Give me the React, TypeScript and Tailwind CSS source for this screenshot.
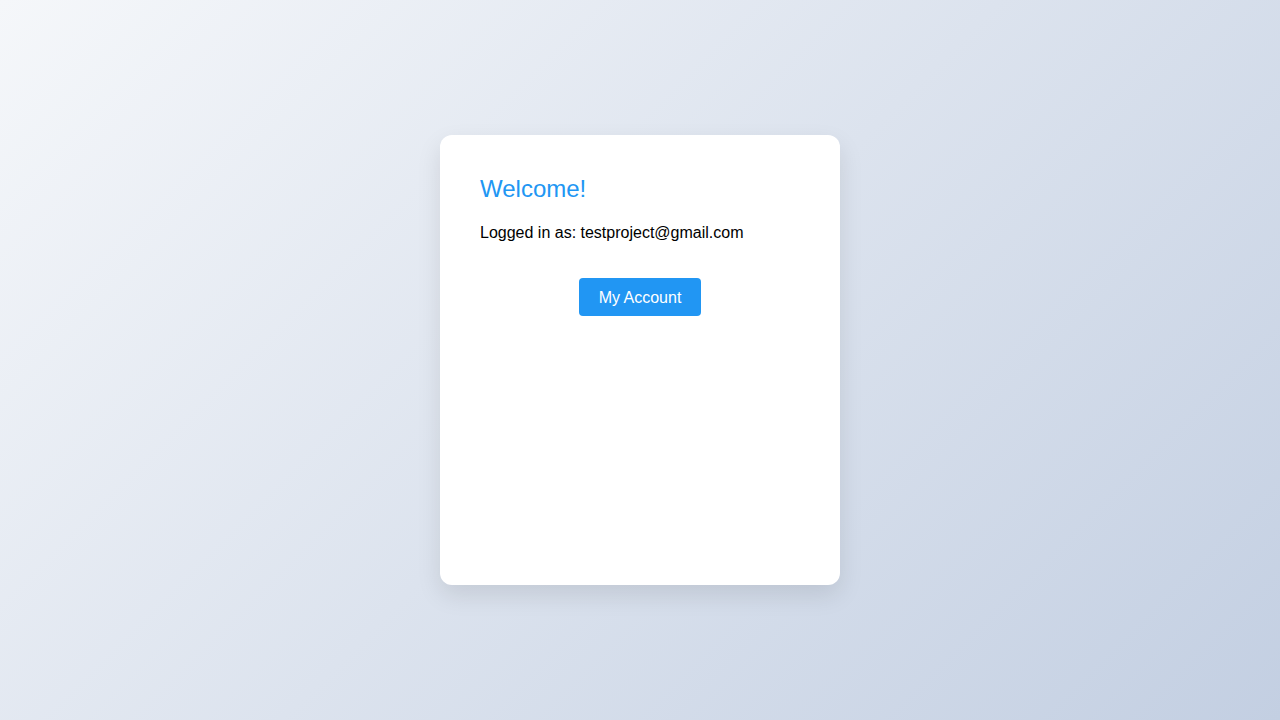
export default function App() {
  return (
    <div className="flex h-[720px] w-full items-center justify-center bg-[linear-gradient(135deg,#f5f7fa_0%,#c3cfe2_100%)] font-['Liberation_Sans',Arial,sans-serif]">
      <div className="h-[450px] w-[400px] rounded-xl bg-white p-10 shadow-[0_10px_25px_rgba(0,0,0,0.1)]">
        <h1 className="text-[24px] leading-[28px] text-[#2196f3]">Welcome!</h1>
        <p className="mt-[21px] text-[16px] leading-[18px] text-black">
          Logged in as: testproject@gmail.com
        </p>
        <div className="mt-[36px] flex justify-center">
          <button
            type="button"
            className="rounded bg-[#2196f3] px-5 pt-[11px] pb-[9px] text-[16px] leading-[18px] text-white"
          >
            My Account
          </button>
        </div>
      </div>
    </div>
  );
}
